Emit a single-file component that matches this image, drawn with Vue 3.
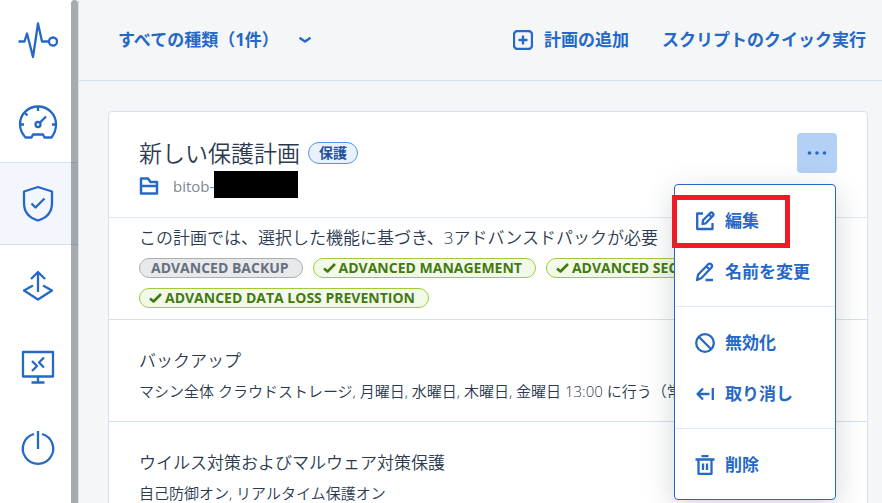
<script setup>
import { ref } from 'vue';

const navItems = [
  { id: 'monitoring', label: 'モニタリング' },
  { id: 'dashboard', label: 'ダッシュボード' },
  { id: 'protection', label: '保護' },
  { id: 'recovery', label: '復元' },
  { id: 'remote', label: 'リモート接続' },
  { id: 'power', label: '電源' }
];

const activeNav = ref('protection');
const menuOpen = ref(true);

const packs = [
  { name: 'ADVANCED BACKUP', enabled: false },
  { name: 'ADVANCED MANAGEMENT', enabled: true },
  { name: 'ADVANCED SECURITY', enabled: true },
  { name: 'ADVANCED DATA LOSS PREVENTION', enabled: true }
];

const modules = [
  {
    title: 'バックアップ',
    summary: 'マシン全体 クラウドストレージ, 月曜日, 水曜日, 木曜日, 金曜日 13:00 に行う（常'
  },
  {
    title: 'ウイルス対策およびマルウェア対策保護',
    summary: '自己防御オン, リアルタイム保護オン'
  }
];

const menuGroups = [
  [
    { id: 'edit', label: '編集', marked: true },
    { id: 'rename', label: '名前を変更' }
  ],
  [
    { id: 'disable', label: '無効化' },
    { id: 'revoke', label: '取り消し' }
  ],
  [{ id: 'delete', label: '削除' }]
];
</script>

<template>
  <div class="app">
    <nav class="sidebar">
      <button
        v-for="item in navItems"
        :key="item.id"
        type="button"
        class="nav-item"
        :class="{ active: activeNav === item.id }"
        :aria-label="item.label"
        @click="activeNav = item.id"
      >
        <svg class="nav-icon" viewBox="0 0 40 40" aria-hidden="true">
          <template v-if="item.id === 'monitoring'">
            <path d="M0.500 20.500H6.500L9 12.500L15 36L20 2.500L24 20.500H31" />
            <circle cx="35" cy="20.500" r="4" />
          </template>
          <template v-else-if="item.id === 'dashboard'">
            <path d="M7.500 35.500C4 31.500 2 28 2 22.500C2 12 10 4.500 20 4.500S38 12 38 22.500C38 28 36.500 31.500 33.500 35.500H26.500L25 32.500H15L13.500 35.500Z" />
            <path d="M20 5V9M7 11L9.500 13.500M2.500 22.500H6M34 22.500H37.500M22 20.500L28 14.500" />
            <circle cx="20" cy="22.500" r="2.500" />
          </template>
          <template v-else-if="item.id === 'protection'">
            <path d="M20 3L34 7.500V19C34 28.500 28.500 34 20 36.500C11.500 34 6 28.500 6 19V7.500Z" />
            <path d="M13.500 19.500L17.500 23.500L26.500 14.500" />
          </template>
          <template v-else-if="item.id === 'recovery'">
            <path d="M20 26V6M13 13L20 6L27 13M15 19.500L6 24.500L20 33.500L34 24.500L25 19.500" />
          </template>
          <template v-else-if="item.id === 'remote'">
            <path d="M5 5H35V29.500H5ZM20 29.500V35.500M13.500 35.500H26.500M14 14L19 19L14 24M26 10.500L21 15.500L26 20.500" />
          </template>
          <template v-else>
            <path d="M20 3V21M16 6A15.200 15.200 0 1 0 24 6" />
          </template>
        </svg>
      </button>
      <div class="scroll-thumb"></div>
    </nav>

    <div class="content">
      <header class="toolbar">
        <button type="button" class="link-button filter">
          すべての種類（1件）
          <svg class="chevron" viewBox="0 0 14 8" aria-hidden="true">
            <path d="M1.500 1.800L7 5.500L12.500 1.800" />
          </svg>
        </button>
        <div class="toolbar-actions">
          <button type="button" class="link-button">
            <svg class="icon" viewBox="0 0 20 20" aria-hidden="true">
              <rect x="1" y="1" width="18" height="18" rx="3.500" />
              <path d="M10 5.500V14.500M5.500 10H14.500" />
            </svg>
            計画の追加
          </button>
          <button type="button" class="link-button">スクリプトのクイック実行</button>
        </div>
      </header>

      <main class="main">
        <article class="card">
          <div class="card-header">
            <div class="card-info">
              <div class="title-row">
                <h1 class="plan-title">新しい保護計画</h1>
                <span class="tag">保護</span>
              </div>
              <div class="owner-row">
                <svg class="icon folder" viewBox="0 0 20 20" aria-hidden="true">
                  <path d="M2 2.500H9L11.500 6H18V17.500H2ZM2 10H18" />
                </svg>
                <span class="owner">bitob-</span>
                <span class="redacted"></span>
              </div>
            </div>

            <div class="actions">
              <button
                type="button"
                class="more-button"
                aria-label="その他の操作"
                :aria-expanded="menuOpen"
                @click="menuOpen = !menuOpen"
              >
                <svg class="dots" viewBox="0 0 20 4" aria-hidden="true">
                  <circle cx="2.500" cy="2" r="1.800" />
                  <circle cx="10" cy="2" r="1.800" />
                  <circle cx="17.500" cy="2" r="1.800" />
                </svg>
              </button>

              <div v-if="menuOpen" class="menu">
                <div v-for="(group, index) in menuGroups" :key="index" class="menu-group">
                  <button
                    v-for="entry in group"
                    :key="entry.id"
                    type="button"
                    class="menu-item"
                    :class="{ marked: entry.marked }"
                  >
                    <svg class="icon" viewBox="0 0 20 20" aria-hidden="true">
                      <path
                        v-if="entry.id === 'edit'"
                        d="M8 2.500H2.200V18H17.500V12M7.500 13L8 9.300L15.300 2Q16.500 1 17.800 2.200Q19 3.500 18 4.700L10.800 12.300ZM14 3.500L16.500 6"
                      />
                      <path
                        v-else-if="entry.id === 'rename'"
                        d="M2 18L3.200 12.500L13.300 2.200Q14.800 1 16.300 2.400Q17.800 4 16.500 5.500L6.500 16ZM11.500 4.500L14.500 7.500M10.500 18H18"
                      />
                      <template v-else-if="entry.id === 'disable'">
                        <circle cx="10" cy="10" r="8.800" />
                        <path d="M4 4L16 16" />
                      </template>
                      <path
                        v-else-if="entry.id === 'revoke'"
                        d="M14.500 10H2.500M8 4.500L2.500 10L8 15.500M17.800 4V16"
                      />
                      <path
                        v-else
                        d="M0.500 4.500H19.500M6.500 1H13.500M3.500 5V18.800H16.500V5M8 8.500V15M12 8.500V15"
                      />
                    </svg>
                    {{ entry.label }}
                  </button>
                </div>
              </div>
            </div>
          </div>

          <section class="packs">
            <p class="packs-note">この計画では、選択した機能に基づき、3アドバンスドパックが必要</p>
            <ul class="pack-list">
              <li
                v-for="pack in packs"
                :key="pack.name"
                class="pack"
                :class="{ enabled: pack.enabled }"
              >
                <svg v-if="pack.enabled" class="check" viewBox="0 0 13 12" aria-hidden="true">
                  <path d="M1 6.500L4.500 9.500L12 2" />
                </svg>
                {{ pack.name }}
              </li>
            </ul>
          </section>

          <section v-for="mod in modules" :key="mod.title" class="module">
            <h2 class="module-title">{{ mod.title }}</h2>
            <p class="module-summary">{{ mod.summary }}</p>
          </section>
        </article>
      </main>
    </div>
  </div>
</template>

<style>
body {
  margin: 0;
}
</style>

<style scoped>
.app {
  display: flex;
  height: 100vh;
  overflow: hidden;
  background: #f4f6f8;
  color: #2b3a50;
  font-family: 'Open Sans', 'Noto Sans CJK JP', sans-serif;
}

button {
  margin: 0;
  padding: 0;
  border: 0;
  background: none;
  color: #2668c5;
  font-family: inherit;
  cursor: pointer;
}

svg {
  flex: none;
  fill: none;
  stroke: #2668c5;
  stroke-width: 2.3;
  stroke-linejoin: round;
}

/* sidebar */
.sidebar {
  position: relative;
  flex: none;
  width: 78px;
  background: #fff;
  border-right: 1px solid #d5e1f3;
}

.nav-item {
  display: flex;
  align-items: center;
  justify-content: center;
  width: 100%;
  height: 81px;
  padding-right: 2px;
}

.nav-item.active {
  height: 83px;
  background: #f3f7fd;
  border-top: 1px solid #d5e1f3;
  border-bottom: 1px solid #d5e1f3;
}

.nav-icon {
  width: 40px;
  height: 40px;
}

.scroll-thumb {
  position: absolute;
  top: 0;
  right: 0;
  bottom: 0;
  width: 7px;
  border-radius: 4px 4px 0 0;
  background: rgba(16, 24, 26, 0.36);
}

/* toolbar */
.content {
  flex: 1;
  min-width: 0;
}

.toolbar {
  display: flex;
  align-items: center;
  justify-content: space-between;
  height: 80px;
  padding: 0 16px 0 39px;
  border-bottom: 1px solid #d5e1f3;
}

.toolbar-actions {
  display: flex;
  gap: 33px;
}

.link-button {
  display: flex;
  align-items: center;
  gap: 11px;
  font-size: 17px;
  font-weight: 700;
  line-height: 24px;
  white-space: nowrap;
}

.filter {
  gap: 19px;
}

.icon {
  width: 20px;
  height: 20px;
}

.chevron {
  width: 14px;
  height: 8px;
  stroke-width: 2.4;
}

/* plan card */
.main {
  padding: 30px 14px 0 29px;
}

.card {
  background: #fff;
  border: 1px solid #d5e1f3;
  border-radius: 4px;
}

.card-header {
  display: flex;
  align-items: flex-start;
  justify-content: space-between;
  padding: 21px 30px 16px;
}

.card-info {
  padding-top: 5px;
}

.title-row {
  display: flex;
  align-items: center;
  gap: 8px;
  height: 30px;
  margin-bottom: 3px;
}

.plan-title {
  margin: 0;
  font-size: 23px;
  font-weight: 350;
  line-height: 28px;
}

.tag {
  padding: 0 10px;
  border: 1px solid #5495ed;
  border-radius: 11px;
  background: #e9f1fc;
  color: #21529b;
  font-size: 14px;
  font-weight: 700;
  line-height: 20px;
}

.owner-row {
  display: flex;
  align-items: center;
  height: 30px;
}

.folder {
  margin-right: 14px;
  stroke-width: 2.5;
}

.owner {
  color: #7f8794;
  font-size: 15px;
  line-height: 20px;
}

.redacted {
  align-self: flex-start;
  width: 84px;
  height: 27px;
  background: #000;
}

.actions {
  position: relative;
}

.more-button {
  display: flex;
  align-items: center;
  justify-content: center;
  width: 40px;
  height: 40px;
  border-radius: 4px;
  background: #b3d0f7;
}

.dots {
  width: 20px;
  height: 4px;
  fill: #2668c5;
  stroke: none;
}

/* dropdown menu */
.menu {
  position: absolute;
  top: 51px;
  right: 1px;
  z-index: 1;
  width: 160px;
  border: 1px solid #2668c5;
  border-radius: 4px;
  background: #fff;
  box-shadow: 0 8px 30px rgba(36, 49, 67, 0.2);
}

.menu-group {
  padding: 10px 0 9px;
}

.menu-group + .menu-group {
  border-top: 1px solid #dfe8f5;
}

.menu-item {
  position: relative;
  display: flex;
  align-items: center;
  gap: 10px;
  width: 100%;
  height: 51px;
  padding-left: 20px;
  font-size: 17px;
  font-weight: 700;
  line-height: 24px;
}

.menu-item.marked::after {
  content: '';
  position: absolute;
  top: 0;
  left: -3px;
  width: 108px;
  height: 43px;
  border: 5px solid #ed1c24;
}

/* advanced packs */
.packs {
  padding: 8px 30px 11px;
  border-top: 1px solid #dfe8f5;
}

.packs-note {
  margin: 0 0 8px;
  font-size: 17px;
  font-weight: 350;
  line-height: 24px;
  white-space: nowrap;
}

.pack-list {
  display: flex;
  flex-wrap: wrap;
  gap: 10px;
  margin: 0;
  padding: 0;
  list-style: none;
}

.pack {
  display: flex;
  align-items: center;
  gap: 3px;
  padding: 0 13px 0 11px;
  border: 1px solid #a9adb4;
  border-radius: 10px;
  background: #e8e9eb;
  color: #66707f;
  font-size: 14px;
  font-weight: 700;
  line-height: 18px;
}

.pack.enabled {
  padding: 0 13px 0 9px;
  border-color: #9fcb3b;
  background: #f3f9e8;
  color: #427a10;
}

.check {
  width: 13px;
  height: 12px;
  stroke: #427a10;
  stroke-width: 2.6;
}

/* plan modules */
.module {
  padding: 29px 30px 20px;
  border-top: 1px solid #d5e1f3;
}

.module-title {
  margin: 0 0 8px;
  font-size: 17px;
  font-weight: 350;
  line-height: 24px;
}

.module-summary {
  margin: 0;
  font-size: 15px;
  font-weight: 350;
  line-height: 20px;
  white-space: nowrap;
}
</style>
